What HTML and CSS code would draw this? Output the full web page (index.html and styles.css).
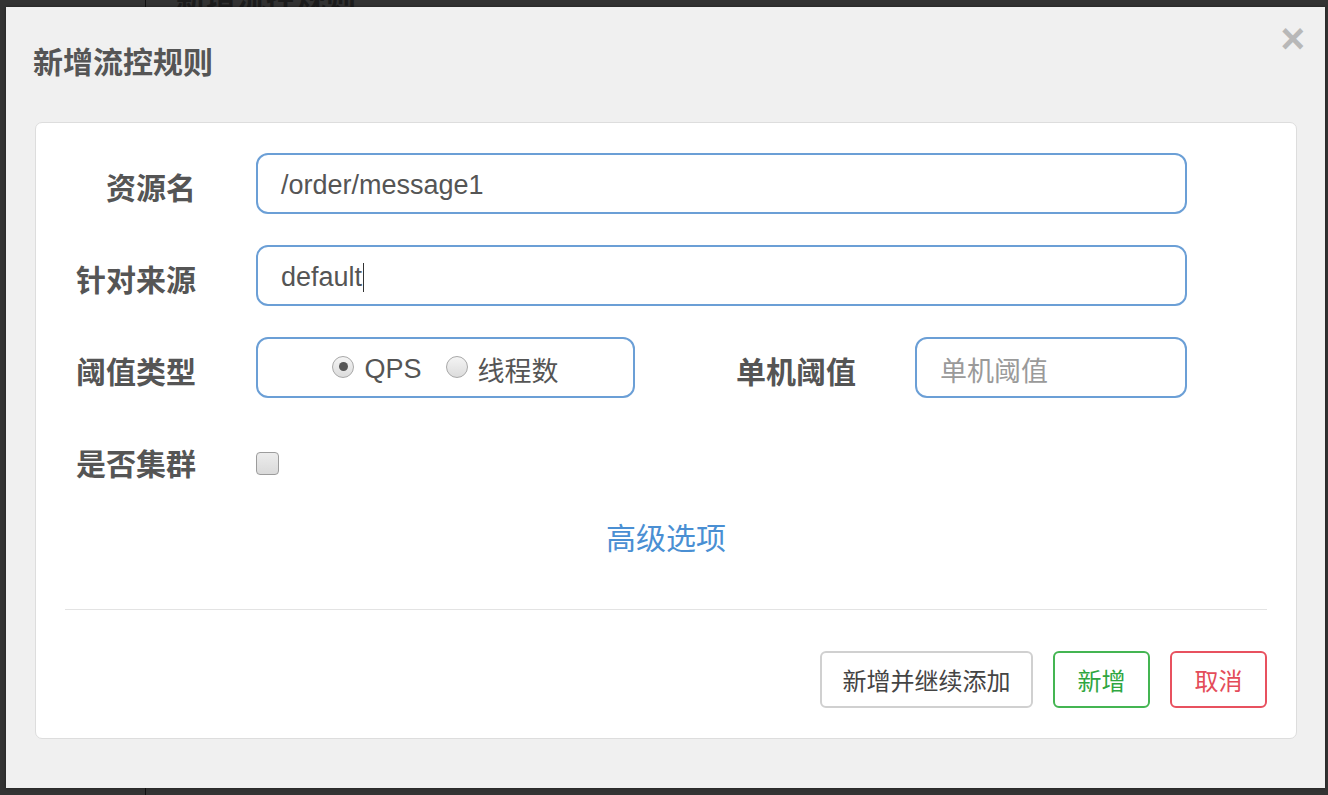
FILE: index.html
```html
<!DOCTYPE html>
<html lang="zh">
<head>
<meta charset="utf-8">
<title>新增流控规则</title>
<link rel="stylesheet" href="styles.css">
</head>
<body>
<div class="page">
  <div class="page-side"></div>
  <div class="page-main"><div class="page-title">新增流控规则</div></div>
</div>
<div class="modal">
  <div class="modal-header">
    <div class="modal-title">新增流控规则</div>
    <div class="close">×</div>
  </div>
  <div class="card">
    <div class="form-row">
      <div class="label">资源名</div>
      <div class="control wide">/order/message1</div>
    </div>
    <div class="form-row">
      <div class="label">针对来源</div>
      <div class="control wide">default<span class="caret"></span></div>
    </div>
    <div class="form-row">
      <div class="label">阈值类型</div>
      <div class="control radio-box">
        <span class="radio checked"></span><span class="radio-text">QPS</span>
        <span class="radio"></span><span class="radio-text">线程数</span>
      </div>
      <div class="label label2">单机阈值</div>
      <div class="control small placeholder">单机阈值</div>
    </div>
    <div class="form-row row-check">
      <div class="label">是否集群</div>
      <div class="check-cell"><span class="checkbox"></span></div>
    </div>
    <div class="advanced">高级选项</div>
    <div class="footer">
      <button class="btn btn-default">新增并继续添加</button>
      <button class="btn btn-success">新增</button>
      <button class="btn btn-danger">取消</button>
    </div>
  </div>
</div>
</body>
</html>
```
FILE: styles.css
```css
* { box-sizing: border-box; }
html, body { margin: 0; height: 100%; }
body {
  background: #333333;
  font-family: "Liberation Sans", "Noto Sans CJK SC", sans-serif;
  overflow: hidden;
}
.page { display: flex; height: 795px; }
.page-side { width: 146px; border-right: 1px solid #111; }
.page-main { flex: 1; padding-left: 30px; }
.page-title {
  margin-top: -24px;
  font-size: 30px;
  font-weight: bold;
  color: #1c1c1c;
  line-height: 40px;
  font-family: "Noto Sans CJK SC", sans-serif;
}
.modal {
  position: absolute;
  left: 6px;
  top: 7px;
  width: 1319px;
  height: 781px;
  background: #f0f0f0;
  box-shadow: 0 0 3px rgba(0,0,0,0.4);
  padding: 0 28px 0 29px;
}
.modal-header {
  height: 115px;
  display: flex;
  justify-content: space-between;
  align-items: flex-start;
  margin-right: -8px;
}
.modal-title {
  margin-top: 33px;
  margin-left: -2px;
  font-size: 30px;
  line-height: 40px;
  font-weight: bold;
  color: #555;
  font-family: "Noto Sans CJK SC", sans-serif;
}
.close {
  margin-top: 12px;
  font-size: 42px;
  line-height: 40px;
  font-weight: bold;
  color: #b8b8b8;
}
.card {
  background: #fff;
  border: 1px solid #dddddd;
  border-radius: 7px;
  padding: 30px 29px 30px 0;
}
.form-row {
  display: flex;
  align-items: center;
  height: 61px;
  margin-bottom: 31px;
}
.label {
  width: 160px;
  flex: none;
  text-align: right;
  font-family: "Noto Sans CJK SC", sans-serif;
  font-weight: bold;
  font-size: 30px;
  color: #555;
  margin-right: 60px;
  line-height: 40px;
  padding-top: 4px;
}
.label2 { flex: 1; width: auto; margin-right: 59px; }
.control {
  height: 61px;
  border: 2px solid #6b9fd6;
  border-radius: 12px;
  padding: 3px 23px 0;
  display: flex;
  align-items: center;
  font-size: 27px;
  color: #555;
  background: #fff;
}
.wide { width: 931px; margin-right: 80px; }
.caret {
  display: inline-block;
  width: 0;
  height: 29px;
  border-left: 1.5px solid #333;
  margin-left: 1px;
}
.radio-box {
  width: 379px;
  justify-content: center;
  padding: 3px 0 0;
}
.radio {
  width: 22px;
  height: 22px;
  border-radius: 50%;
  border: 1px solid #a8a8a8;
  background: linear-gradient(#f4f4f4, #dcdcdc);
  display: inline-flex;
  align-items: center;
  justify-content: center;
  margin-right: 10px;
  margin-top: -5px;
}
.radio.checked::after {
  content: "";
  width: 9px;
  height: 9px;
  border-radius: 50%;
  background: #555;
}
.radio-text { margin-right: 24px; font-family: "Liberation Sans", "Noto Sans CJK SC", sans-serif; }
.radio-text:last-child { margin-right: 0; }
.small { width: 272px; margin-right: 80px; flex: none; }
.placeholder { color: #9a9a9a; font-family: "Noto Sans CJK SC", sans-serif; font-size: 27px; }
.row-check { margin-top: 5px; margin-bottom: 0; }
.check-cell { display: flex; align-items: center; height: 61px; }
.checkbox {
  width: 23px;
  height: 23px;
  border: 1px solid #9c9c9c;
  border-radius: 4px;
  background: linear-gradient(#ececec, #dadada);
  margin-top: 8px;
}
.advanced {
  margin-left: 29px;
  margin-top: 26px;
  text-align: center;
  font-family: "Noto Sans CJK SC", sans-serif;
  font-size: 30px;
  line-height: 40px;
  color: #4a8fd3;
}
.footer {
  margin: 53px 0 0 29px;
  border-top: 1px solid #e3e3e3;
  padding-top: 41px;
  display: flex;
  justify-content: flex-end;
  gap: 20px;
}
.btn {
  height: 57px;
  border-radius: 6px;
  background: #fff;
  font-family: "Noto Sans CJK SC", sans-serif;
  font-size: 24px;
  padding: 0;
  border: 2px solid #d0d0d0;
  color: #444;
}
.btn-default { width: 213px; }
.btn-success { width: 97px; border-color: #44b552; color: #2fa640; }
.btn-danger { width: 97px; border-color: #e8515f; color: #e44c5a; }
```
